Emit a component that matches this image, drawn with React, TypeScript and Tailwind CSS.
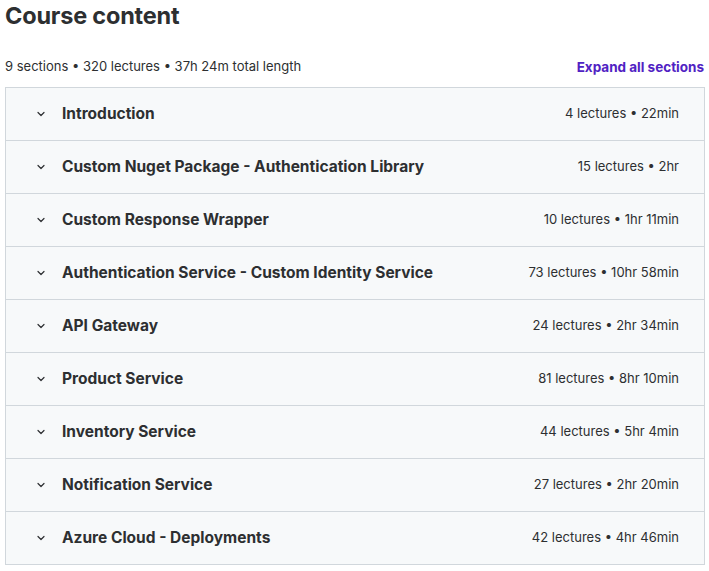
import React from "react";

const sections = [
  ["Introduction", "4 lectures • 22min"],
  ["Custom Nuget Package - Authentication Library", "15 lectures • 2hr"],
  ["Custom Response Wrapper", "10 lectures • 1hr 11min"],
  ["Authentication Service - Custom Identity Service", "73 lectures • 10hr 58min"],
  ["API Gateway", "24 lectures • 2hr 34min"],
  ["Product Service", "81 lectures • 8hr 10min"],
  ["Inventory Service", "44 lectures • 5hr 4min"],
  ["Notification Service", "27 lectures • 2hr 20min"],
  ["Azure Cloud - Deployments", "42 lectures • 4hr 46min"],
];

function Chevron() {
  return (
    <svg width="12" height="12" viewBox="0 0 24 24" fill="none" stroke="#2d2f31" strokeWidth="2.4" strokeLinecap="round" strokeLinejoin="round">
      <path d="M6 9l6 6 6-6" />
    </svg>
  );
}

export default function App() {
  return (
    <div className="w-[709px] h-[571px] bg-white text-[#2d2f31]" style={{ fontFamily: "Inter, 'Noto Sans', sans-serif" }}>
      <h2 className="pl-[5px] pt-[1px] text-[23.5px] leading-[30px] font-bold tracking-[-0.2px]">Course content</h2>
      <div className="flex items-center justify-between pl-[5px] pr-[5px] mt-[21px] h-[30px]">
        <span className="text-[13px]">9 sections • 320 lectures • 37h 24m total length</span>
        <span className="text-[13.5px] font-bold text-[#5022c3]">Expand all sections</span>
      </div>
      <div className="ml-[5px] w-[700px] mt-[5px] border-x border-t border-[#d1d7dc]">
        {sections.map(([t, m], i) => (
          <div
            key={i}
            className="flex items-center h-[53px] bg-[#f7f9fa] pl-[29px] pr-[25px] border-b border-[#d1d7dc]"
          >
            <Chevron />
            <span className="ml-[15px] text-[15.5px] font-bold flex-1">{t}</span>
            <span className="text-[13px]">{m}</span>
          </div>
        ))}
      </div>
    </div>
  );
}
